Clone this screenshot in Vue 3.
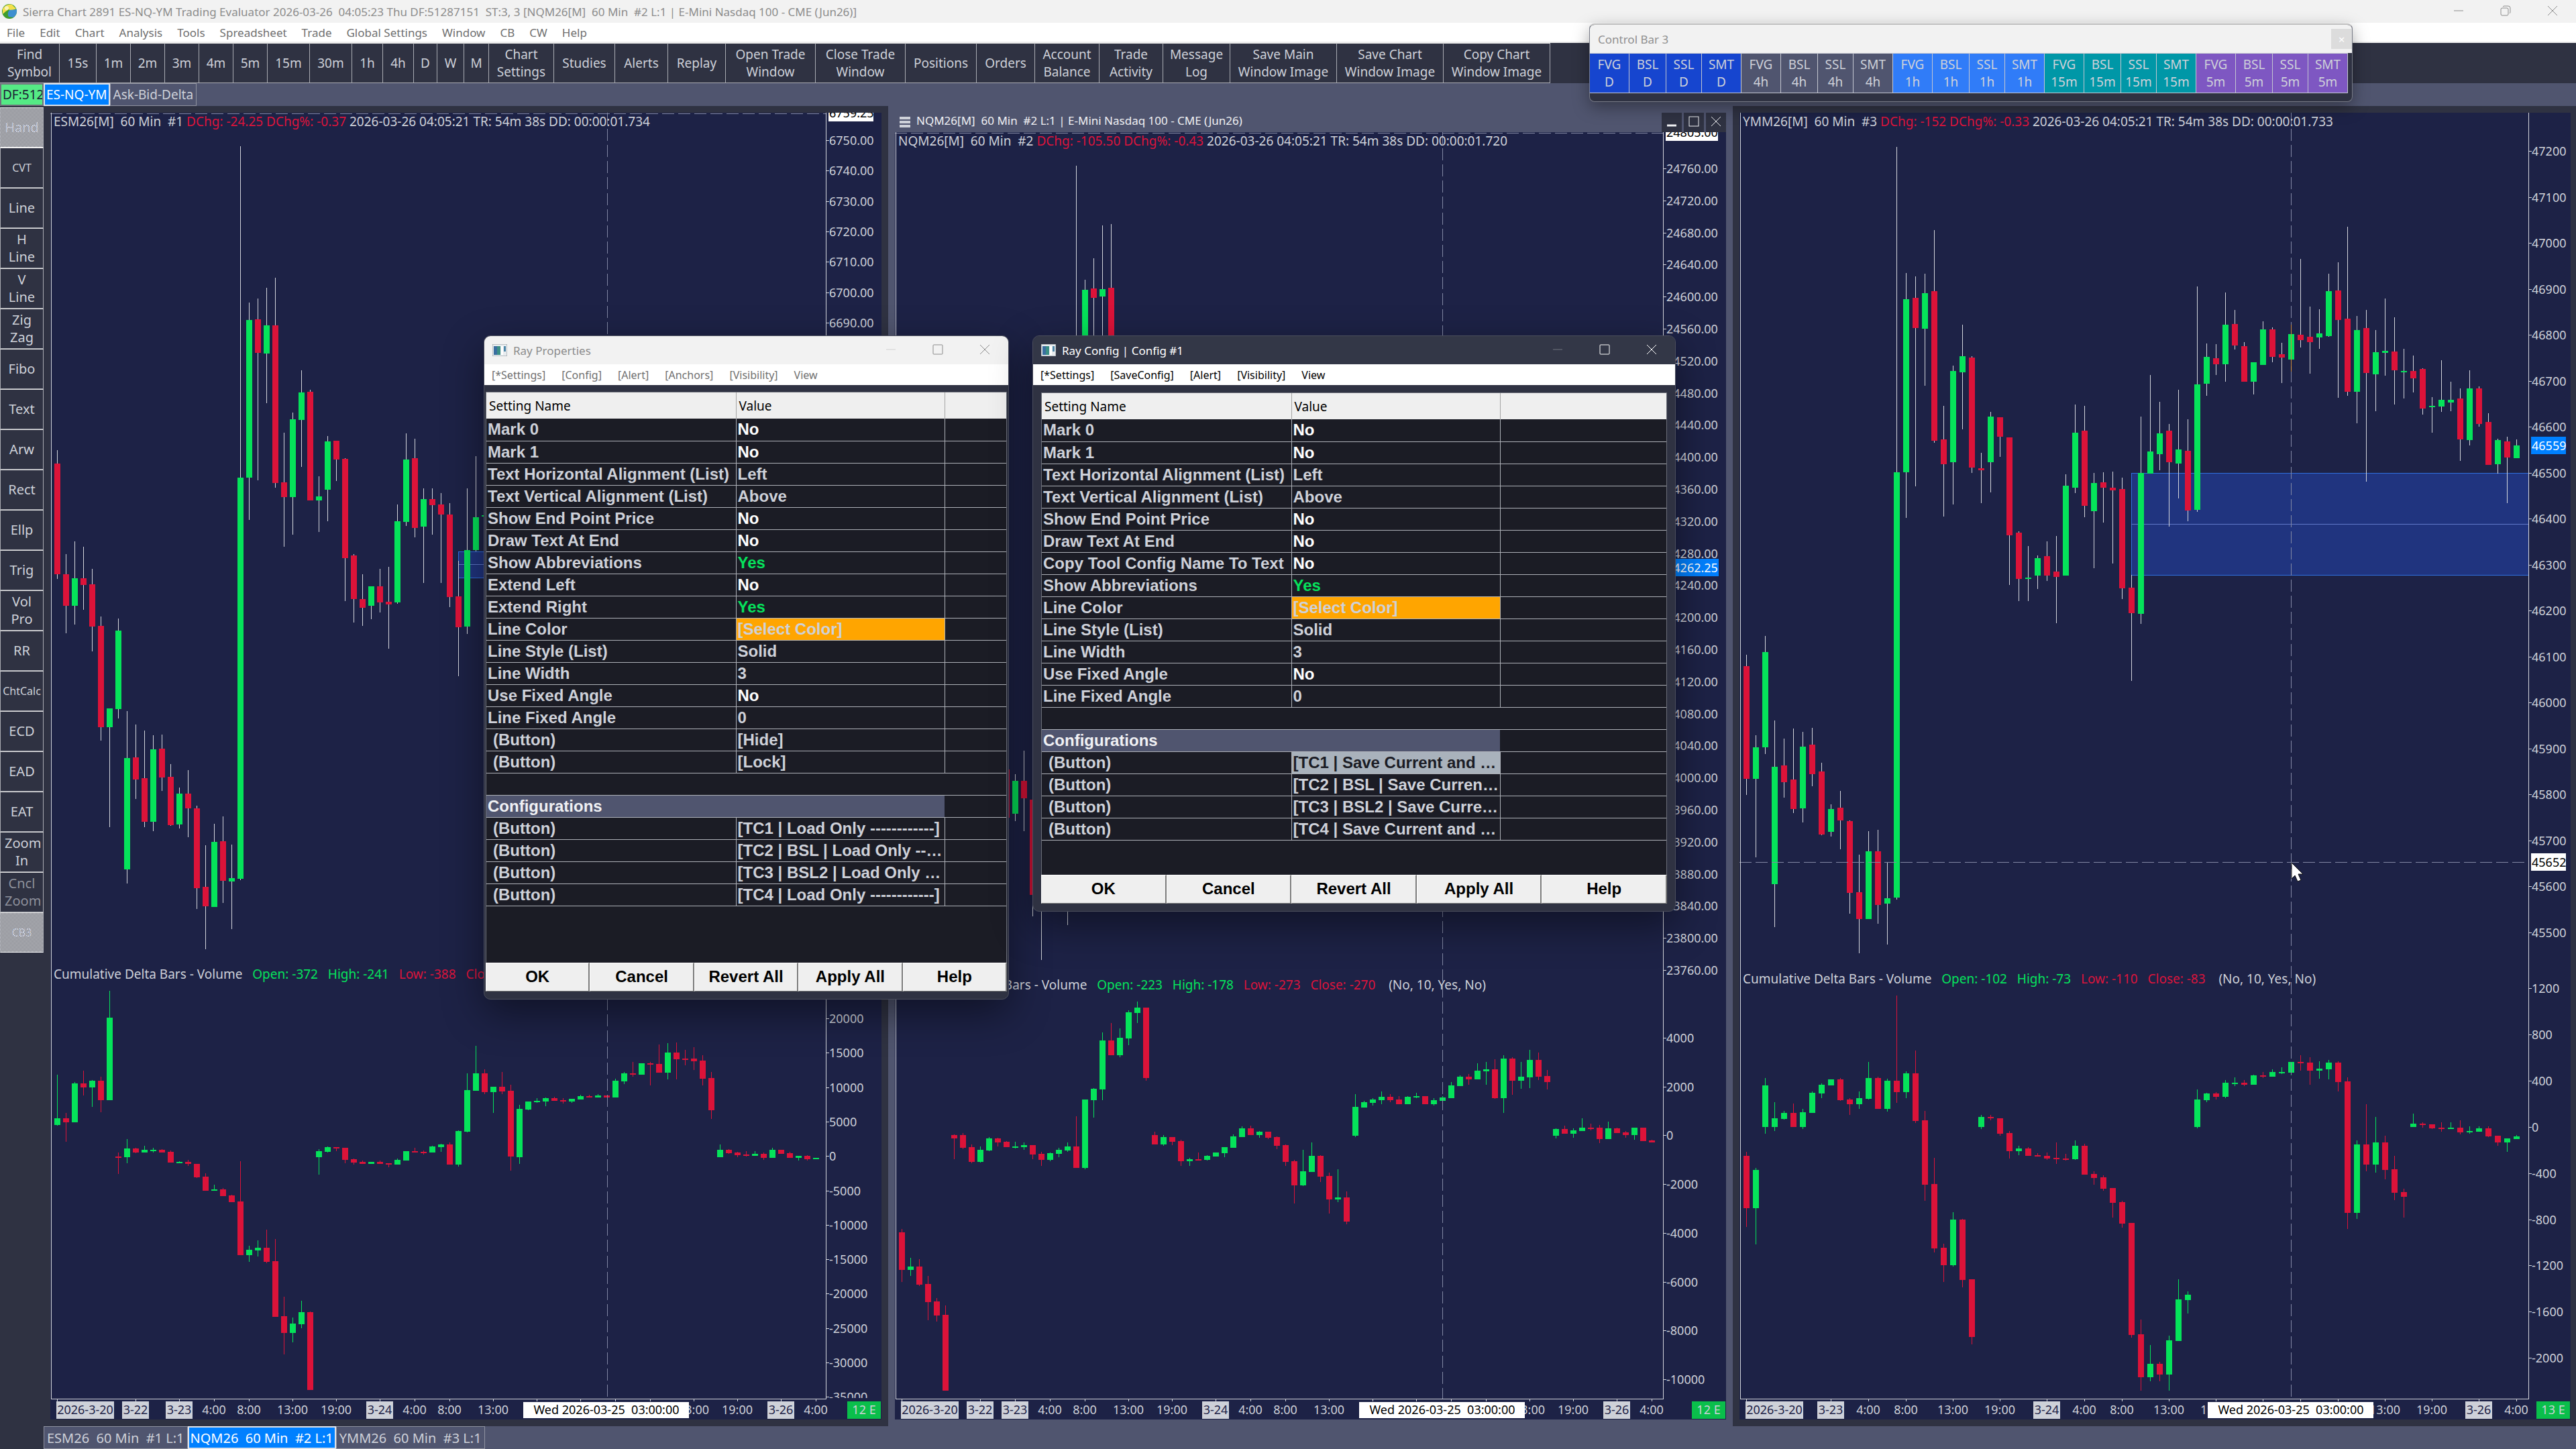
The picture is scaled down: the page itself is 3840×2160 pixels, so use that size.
<template>
  <div class="app">
    <header class="titlebar">
      <svg class="logo" viewBox="0 0 24 24">
        <circle cx="12" cy="12" r="11" fill="#3f9c2d" />
        <path d="M2 8 Q8 0 16 2 L22 8 Q15 12 11 9 Q6 12 2 16 Z" fill="#f3e04a" />
        <path d="M12 10 L23 9 Q24 16 18 21 L11 20 Q8 15 12 10Z" fill="#3d8fd0" />
        <circle cx="8" cy="7" r="3" fill="#fff" opacity="0.6" />
      </svg>
      <h1>Sierra Chart 2891 ES-NQ-YM Trading Evaluator 2026-03-26&nbsp; 04:05:23 Thu DF:51287151&nbsp; ST:3, 3 [NQM26[M]&nbsp; 60 Min&nbsp; #2 L:1 | E-Mini Nasdaq 100 - CME (Jun26)]</h1>
      <div class="win-controls">
        <button aria-label="Minimize"><svg viewBox="0 0 16 16"><path d="M1 8H15" /></svg></button>
        <button aria-label="Restore"><svg viewBox="0 0 16 16"><rect x="1" y="4" width="11" height="11" rx="2" /><path d="M4 2Q5 1 6 1H12Q15 1 15 4V10Q15 11 14 12" /></svg></button>
        <button aria-label="Close"><svg viewBox="0 0 16 16"><path d="M1 1L15 15M15 1L1 15" /></svg></button>
      </div>
    </header>

    <nav class="menubar">
      <button v-for="m in menus" :key="m">{{ m }}</button>
    </nav>

    <div class="toolbar">
      <button v-for="t in tools" :key="t[0]" :style="{ width: t[1] + 'px' }">{{ t[0] }}</button>
    </div>

    <div class="tabs">
      <button class="feed">DF:51287151</button>
      <button class="tab active">ES-NQ-YM</button>
      <button class="tab">Ask-Bid-Delta</button>
    </div>

    <div class="body">
      <aside class="sidebar">
        <button v-for="s in drawTools" :key="s.label" :class="s.cls">{{ s.label }}</button>
      </aside>

      <div class="workspace">
        <main class="charts">
          <section v-for="c in charts" :key="c.id" class="chart-window" :class="{ active: c.active }">
            <div v-if="c.active" class="caption">
              <svg class="burger" viewBox="0 0 16 16"><path d="M0 2H16M0 8H16M0 14H16" /></svg>
              <span>NQM26[M]&nbsp; 60 Min&nbsp; #2 L:1 | E-Mini Nasdaq 100 - CME (Jun26)</span>
              <div class="caption-buttons">
                <button aria-label="Minimize chart"><svg viewBox="0 0 16 16"><path d="M1 14H15" stroke-width="3" /></svg></button>
                <button aria-label="Maximize chart"><svg viewBox="0 0 16 16"><rect x="1" y="1" width="14" height="14" /></svg></button>
                <button aria-label="Close chart"><svg viewBox="0 0 16 16"><path d="M1 1L15 15M15 1L1 15" /></svg></button>
              </div>
            </div>

            <svg class="plot" :viewBox="`${c.x} ${c.y} ${c.w} ${2116 - c.y}`" preserveAspectRatio="xMinYMin meet" role="img" :aria-label="c.symbol">
              <clipPath :id="'axis' + c.id">
                <rect :x="c.axis" :y="c.y" width="120" :height="2084 - c.y" />
              </clipPath>
              <g shape-rendering="crispEdges">
                <g v-if="c.zone">
                  <rect :x="c.zone.x" :y="c.zone.y1" :width="c.axis - c.zone.x" :height="c.zone.y2 - c.zone.y1" class="zone" />
                  <path :d="`M${c.zone.x} ${c.zone.mid}H${c.axis}`" class="zone-line" />
                </g>
                <g v-for="(b, i) in c.price" :key="'p' + i">
                  <rect :x="b.x" :y="b.hi" width="1" :height="b.lo - b.hi" class="wick" />
                  <rect :x="b.x - 4" :y="b.top" width="9" :height="b.h" :class="b.cls" />
                </g>
                <g v-for="(b, i) in c.delta" :key="'d' + i" :class="b.cls">
                  <rect :x="b.x" :y="b.hi" width="1" :height="b.lo - b.hi" />
                  <rect :x="b.x - 4" :y="b.top" width="9" :height="b.h" />
                </g>
                <path :d="`M${c.cursor} ${c.y}V2085`" class="cross" />
                <path v-if="c.hline" :d="`M${c.x} ${c.hline}H${c.axis}`" class="cross" />
                <path v-else :d="`M${c.x} ${c.y + 1}H${c.axis}`" class="cross top" />
                <rect v-if="c.hline" :x="c.cursor" y="484" width="1" height="70" fill="#d98a1f" opacity="0.8" />
                <path :d="`M${c.x + 1} ${c.y}V2085H${c.axis}V${c.y}`" class="frame" />
                <path :d="c.ticks" class="frame thin" />
              </g>

              <text :x="c.x + 5" :y="c.y + 20" class="head">{{ c.symbol }}<tspan class="neg">{{ c.chg }}</tspan>{{ c.status }}</text>
              <text :x="c.x + 5" :y="c.dy" class="head">{{ 'Cumulative Delta Bars - Volume   ' }}<tspan class="pos">{{ c.d[0] }}</tspan><tspan class="neg">{{ c.d[1] }}</tspan>(No, 10, Yes, No)</text>

              <g :clip-path="`url(#axis${c.id})`">
                <text v-for="l in c.labels" :key="l.t + l.y" :x="c.axis + 5" :y="l.y + 7">{{ l.t }}</text>
              </g>
              <g v-for="f in c.flags" :key="f.t">
                <rect :x="c.axis + 4" :y="f.y - 13" :width="f.w" height="26" :class="f.cls" />
                <text :x="c.axis + 5" :y="f.y + 7" :class="f.cls">{{ f.t }}</text>
              </g>

              <g v-for="t in c.times" :key="t.i">
                <rect v-if="t.date" :x="t.x - t.w / 2" y="2089" :width="t.w" height="26" class="date" />
                <text :x="t.x" y="2108" text-anchor="middle" :class="{ date: t.date }">{{ t.t }}</text>
              </g>
              <rect :x="c.now" y="2090" width="247" height="24" fill="#fff" />
              <text :x="c.now + 124" y="2108" text-anchor="middle" class="white">{{ 'Wed 2026-03-25  03:00:00' }}</text>
              <rect :x="c.x + c.w - 51" y="2089" width="50" height="26" fill="#0abf4b" />
              <text :x="c.x + c.w - 26" y="2108" text-anchor="middle">{{ c.e }}</text>

              <path v-if="c.hline" d="M3416 1286V1310L3421 1305L3425 1314L3430 1312L3426 1303H3433Z" fill="#fff" stroke="#111" />
            </svg>
          </section>
        </main>

        <footer class="chart-tabs">
          <button class="tab">ESM26&nbsp; 60 Min&nbsp; #1 L:1</button>
          <button class="tab active">NQM26&nbsp; 60 Min&nbsp; #2 L:1</button>
          <button class="tab">YMM26&nbsp; 60 Min&nbsp; #3 L:1</button>
        </footer>
      </div>
    </div>

    <div class="control-bar">
      <div class="control-title">
        <span>Control Bar 3</span>
        <button aria-label="Close control bar">×</button>
      </div>
      <div class="control-buttons">
        <template v-for="tf in frames" :key="tf">
          <button v-for="k in kinds" :key="k" :class="['tf' + tf, k]">{{ k }}<br />{{ tf }}</button>
        </template>
      </div>
    </div>

    <div v-for="d in dialogs" :key="d.title" class="dialog" :class="d.cls" role="dialog" :aria-label="d.title">
      <div class="dialog-title">
        <svg class="dialog-icon" viewBox="0 0 22 18">
          <rect width="22" height="18" fill="#e8ecef" stroke="#8f979c" />
          <rect x="2" y="3" width="10" height="13" fill="#3b8f86" />
          <rect x="2" y="3" width="5" height="13" fill="#3a6ea0" />
          <rect x="13" y="3" width="3" height="13" fill="#fff" />
          <rect x="17" y="3" width="3" height="8" fill="#4d86a8" />
        </svg>
        <h2>{{ d.title }}</h2>
        <div class="dialog-controls">
          <button aria-label="Minimize" class="dim"><svg viewBox="0 0 16 16"><path d="M1 8H15" /></svg></button>
          <button aria-label="Maximize"><svg viewBox="0 0 16 16"><rect x="1" y="1" width="14" height="14" rx="1" /></svg></button>
          <button aria-label="Close"><svg viewBox="0 0 16 16"><path d="M1 1L15 15M15 1L1 15" /></svg></button>
        </div>
      </div>
      <nav class="dialog-menu">
        <button v-for="m in d.menu" :key="m">{{ m }}</button>
      </nav>
      <div class="dialog-body">
        <div class="grid-box">
          <table>
            <colgroup><col class="c1" /><col class="c2" /><col /></colgroup>
            <thead>
              <tr><th>Setting Name</th><th>Value</th><th></th></tr>
            </thead>
            <tbody>
              <tr v-for="(r, i) in d.rows" :key="i">
                <td v-if="!r[0]" colspan="3"></td>
                <template v-else-if="r.length === 1">
                  <td colspan="2" class="group">{{ r[0] }}</td>
                  <td></td>
                </template>
                <template v-else>
                  <td :class="{ indent: r[0] === '(Button)' }">{{ r[0] }}</td>
                  <td :class="valueClass(r)">
                    <button v-if="r[1][0] === '['">{{ r[1] }}</button>
                    <template v-else>{{ r[1] }}</template>
                  </td>
                  <td></td>
                </template>
              </tr>
            </tbody>
          </table>
        </div>
        <div class="dialog-actions">
          <button v-for="a in actions" :key="a">{{ a }}</button>
        </div>
      </div>
    </div>
  </div>
</template>

<script setup>
const menus = ['File', 'Edit', 'Chart', 'Analysis', 'Tools', 'Spreadsheet', 'Trade', 'Global Settings', 'Window', 'CB', 'CW', 'Help'];

const tools = [
  ['Find Symbol', 89], ['15s', 55], ['1m', 51], ['2m', 51], ['3m', 51], ['4m', 51], ['5m', 51], ['15m', 63], ['30m', 63],
  ['1h', 46], ['4h', 46], ['D', 35], ['W', 40], ['M', 37], ['Chart Settings', 97], ['Studies', 91], ['Alerts', 79],
  ['Replay', 86], ['Open Trade Window', 134], ['Close Trade Window', 134], ['Positions', 106], ['Orders', 87],
  ['Account Balance', 96], ['Trade Activity', 95], ['Message Log', 100], ['Save Main Window Image', 159],
  ['Save Chart Window Image', 159], ['Copy Chart Window Image', 159]
];

const drawTools = [
  { label: 'Hand', cls: 'pressed' }, { label: 'CVT', cls: 'small' }, { label: 'Line' }, { label: 'H Line' }, { label: 'V Line' },
  { label: 'Zig Zag' }, { label: 'Fibo' }, { label: 'Text' }, { label: 'Arw' }, { label: 'Rect' }, { label: 'Ellp' },
  { label: 'Trig' }, { label: 'Vol Pro' }, { label: 'RR' }, { label: 'ChtCalc', cls: 'small' }, { label: 'ECD' },
  { label: 'EAD' }, { label: 'EAT' }, { label: 'Zoom In' }, { label: 'Cncl Zoom', cls: 'off' }, { label: 'CB3', cls: 'pressed small' }
];

const frames = ['D', '4h', '1h', '15m', '5m'];
const kinds = ['FVG', 'BSL', 'SSL', 'SMT'];
const actions = ['OK', 'Cancel', 'Revert All', 'Apply All', 'Help'];

const common = [['Mark 0', 'No'], ['Mark 1', 'No'], ['Text Horizontal Alignment (List)', 'Left'], ['Text Vertical Alignment (List)', 'Above'],
  ['Show End Point Price', 'No'], ['Draw Text At End', 'No']];

const dialogs = [
  {
    title: 'Ray Properties',
    cls: 'light',
    menu: ['[*Settings]', '[Config]', '[Alert]', '[Anchors]', '[Visibility]', 'View'],
    rows: [...common, ['Show Abbreviations', 'Yes'], ['Extend Left', 'No'], ['Extend Right', 'Yes'],
      ['Line Color', '[Select Color]'], ['Line Style (List)', 'Solid'], ['Line Width', '3'], ['Use Fixed Angle', 'No'],
      ['Line Fixed Angle', '0'], ['(Button)', '[Hide]'], ['(Button)', '[Lock]'], [''], ['Configurations'],
      ['(Button)', '[TC1 | Load Only ------------]'], ['(Button)', '[TC2 | BSL | Load Only ------------]'],
      ['(Button)', '[TC3 | BSL2 | Load Only ------------]'], ['(Button)', '[TC4 | Load Only ------------]']]
  },
  {
    title: 'Ray Config | Config #1',
    cls: 'dark',
    menu: ['[*Settings]', '[SaveConfig]', '[Alert]', '[Visibility]', 'View'],
    rows: [...common, ['Copy Tool Config Name To Text', 'No'], ['Show Abbreviations', 'Yes'],
      ['Line Color', '[Select Color]'], ['Line Style (List)', 'Solid'], ['Line Width', '3'], ['Use Fixed Angle', 'No'],
      ['Line Fixed Angle', '0'], [''], ['Configurations'],
      ['(Button)', '[TC1 | Save Current and Load]', 'sel'], ['(Button)', '[TC2 | BSL | Save Current and Load]'],
      ['(Button)', '[TC3 | BSL2 | Save Current and Load]'], ['(Button)', '[TC4 | Save Current and Load]']]
  }
];

const valueClass = (r) => ({
  yes: r[1] === 'Yes',
  no: r[1] === 'No',
  color: r[1] === '[Select Color]',
  sel: r[2] === 'sel'
});

// One bar per entry: direction, wick top, body top, body bottom, wick bottom. "@n" jumps to bar n.
const parse = (text, x0, step, top, unit) => {
  const bars = [];
  let i = 0;
  for (const item of text.trim().split(/\s*,\s*/)) {
    if (item[0] === '@') {
      i = Number(item.slice(1));
      continue;
    }
    const [dir, ...v] = item.split(' ');
    const [hi, a, b, lo] = v.map((n) => Math.round(top + n * unit));
    bars.push({ x: Math.round(x0 + i * step), cls: dir === 'g' ? 'up' : 'down', hi, top: a, h: Math.max(b - a, 2), lo });
    i++;
  }
  return bars;
};

const P = 1300 / 1568;
const D = 740 / 1568;

const esPrice = parse(`r 640 665 864 872,r 827 864 920 970,g 805 871 920 954,r 814 871 883 928,r 854 882 958 1002,
r 940 956 1139 1163,g 1105 1105 1139 1318,g 943 965 1106 1123,g 1110 1194 1394 1420,r 1134 1193 1233 1268,
r 1145 1230 1309 1318,g 1153 1178 1309 1326,r 1152 1177 1229 1253,r 1205 1228 1315 1316,g 1247 1258 1314 1321,
r 1216 1258 1285 1336,r 1280 1285 1428 1465,r 1351 1426 1461 1538,g 1312 1345 1462 1462,r 1299 1344 1415 1455,
g 1350 1410 1416 1502,g 94 690 1411 1414,g 375 406 690 766,r 368 405 466 695,g 349 416 467 556,r 330 416 700 708,
r 609 698 725 814,g 573 585 725 792,g 497 537 586 671,r 532 536 731 731,g 688 724 731 788,g 615 625 712 768,
r 624 624 657 696,r 655 656 835 912,r 827 830 908 950,r 864 908 924 956,g 885 885 920 944,r 854 885 914 932,
r 850 913 918 997,g 738 768 914 917,g 610 657 770 777,r 620 655 780 797,g 709 729 778 879,r 709 729 739 792,
r 718 738 756 879,r 736 756 905 923,r 840 903 959 1047,g 709 820 958 971,g 651 761 820 823,g 755 757 760 765`, 85, 13, 140, P);

const esDelta = parse(`g 386 523 545 547,r 506 523 536 597,g 409 413 536 536,r 373 413 426 451,g 403 405 426 487,
r 391 405 466 504,g 121 206 466 466,r 631 644 648 699,g 588 619 646 665,r 617 619 631 634,g 610 623 631 631,
g 617 623 625 631,r 621 623 631 631,r 626 629 663 663,g 659 661 664 665,r 655 661 668 674,r 667 667 710 713,
r 698 708 752 752,g 734 748 752 752,r 744 748 769 769,r 765 767 788 788,r 658 786 956 956,g 926 939 956 977,
g 909 932 941 960,r 875 932 977 981,r 905 975 1151 1151,r 1087 1148 1201 1269,g 1153 1172 1201 1231,
g 1100 1136 1174 1187,r 1134 1136 1382 1382,g 621 627 646 701,g 612 614 629 631,r 614 614 619 627,r 617 617 655 665,
r 650 653 663 669,r 657 661 667 667,g 661 661 667 667,r 657 661 667 667,r 665 665 670 678,g 650 655 670 670,
g 627 627 657 657,r 617 627 631 631,r 625 629 631 638,g 610 612 631 631,g 604 606 614 629,r 600 606 670 670,
g 562 564 670 676,g 381 434 566 568,g 294 381 436 436,r 369 381 441 447,g 424 424 441 506,r 377 424 439 447,
r 417 436 644 688,g 481 494 646 667,g 470 470 496 498,g 460 468 473 475,g 458 460 470 485,r 456 460 468 468,
r 460 466 470 477,g 462 462 470 475,g 449 453 464 464,r 449 453 458 458,g 447 451 458 458,r 451 451 458 458,
g 398 405 458 458,g 377 381 407 415,r 345 381 386 392,g 350 350 386 386,r 345 350 354 420,r 290 352 379 379,
g 287 316 379 400,r 284 316 337 400,r 307 335 337 357,r 299 335 343 370,r 325 341 398 419,r 377 396 498 525,
g 607 623 646 646,r 621 623 634 636,r 629 631 640 646,r 627 638 642 644,g 627 636 642 642,r 631 636 648 655,
g 617 623 648 648,r 623 623 636 636,r 629 634 648 648,g 642 642 648 657,r 640 642 653 657,g 648 648 653 653`, 85, 13, 1420, D);

const nqPrice = parse(`@12,r 1130 1147 1219 1230,g 1154 1164 1213 1224,r 1119 1164 1190 1239,r 1180 1192 1334 1366,
g 1300 1340 1350 1431,@19,g 1300 1320 1350 1379,g 247 600 900 1000,g 417 432 520 560,r 385 430 444 560,
g 336 431 442 560,r 334 429 560 600`, 1344, 13, 0, 1);

const nqDelta = parse(`r 873 884 1002 1040,g 964 992 1002 1021,r 968 992 1049 1053,r 1021 1047 1104 1161,
r 1091 1102 1146 1165,r 1114 1144 1384 1384,r 574 576 587 653,r 571 576 617 621,r 606 614 661 665,g 612 623 661 663,
g 582 587 625 627,r 584 587 600 612,r 595 598 614 614,g 598 612 614 619,g 600 608 614 623,r 608 608 638 653,
r 629 636 655 674,g 631 634 655 659,g 617 623 636 646,g 600 612 625 629,r 517 612 680 680,g 464 464 680 684,
g 428 430 466 521,g 252 278 432 466,r 222 278 324 324,g 239 269 324 331,g 182 189 271 292,g 155 174 191 222,
r 174 174 396 405,r 566 576 606 606,g 576 583 606 611,r 583 583 598 608,r 592 595 659 674,g 648 653 659 674,
r 631 653 655 657,g 640 642 655 657,g 631 631 644 644,g 614 614 634 646,g 574 580 617 617,g 549 555 583 583,
r 547 555 576 576,g 563 566 576 585,r 566 566 585 589,r 581 583 610 621,r 606 608 661 674,r 655 659 735 792,
g 623 691 735 738,g 600 642 693 693,r 640 642 708 725,r 695 706 780 824,g 684 773 780 788,r 754 773 850 858,
g 447 487 578 583,g 468 473 489 489,g 460 464 475 483,g 439 456 466 479,r 447 456 466 473,r 453 464 479 479,
g 453 456 479 479,g 443 453 458 460,r 453 453 479 479,g 460 466 479 483,g 453 458 468 468,g 409 420 460 460,
g 388 392 422 422,r 384 392 400 417,g 350 373 400 400,g 345 369 375 417,r 337 369 460 462,g 324 335 460 506,
r 331 335 405 449,g 345 392 405 430,g 307 339 394 428,r 315 339 392 403,r 371 390 409 432,g 555 557 578 587,
r 547 557 572 572,g 555 562 572 585,g 523 553 564 564,r 540 553 555 562,r 545 553 589 602,g 534 555 589 589,
r 553 555 570 570,r 563 568 576 585,g 553 553 576 591,r 553 553 595 595,r 591 593 600 600`, 1344, 13, 1420, D);

const ymPrice = parse(`r 1008 1029 1231 1260,g 1153 1175 1231 1373,g 975 1004 1175 1187,g 1127 1210 1421 1498,
r 1159 1207 1238 1265,r 1141 1233 1286 1293,g 1147 1174 1285 1310,r 1140 1170 1223 1245,r 1203 1218 1332 1333,
g 1277 1286 1327 1335,r 1253 1283 1306 1358,r 1306 1307 1437 1474,r 1368 1435 1484 1545,g 1326 1362 1484 1484,
r 1323 1362 1458 1492,g 1381 1446 1456 1529,g 95 680 1445 1448,g 322 369 680 762,r 328 367 421 706,g 323 358 422 525,
r 245 355 624 627,r 561 621 666 760,g 488 498 662 738,g 415 472 501 603,r 472 474 672 681,r 645 673 677 736,
g 572 580 662 716,r 581 581 616 653,r 618 618 794 883,r 786 789 872 912,g 813 870 872 912,g 830 835 866 890,
r 805 831 866 876,r 795 859 868 952,g 684 704 866 866,g 558 609 708 718,r 561 605 741 761,g 681 700 750 853,
r 680 698 708 771,r 679 708 713 844,r 690 710 889 908,r 865 888 934 1055,g 580 682 935 953,g 505 643 683 683,
g 554 610 648 677,r 593 605 662 778,g 532 639 665 727,r 585 642 749 768,g 346 522 748 751,g 449 473 521 543,
r 450 475 486 505,g 357 415 486 517,r 388 414 452 460,r 446 454 517 518,g 482 482 517 540,g 409 423 487 487,
r 420 423 473 482,r 447 468 474 520,g 415 432 478 500,r 297 433 443 456,r 382 437 446 503,g 387 431 438 458,
g 323 355 435 437,r 303 353 406 546,r 239 404 536 543,g 399 425 536 592,r 388 421 502 697,g 425 464 504 570,
g 368 462 465 507,r 402 463 497 558,g 458 498 501 548,r 470 498 511 537,r 493 495 566 577,g 545 561 563 609,
g 479 550 562 572,g 518 550 555 570,r 530 548 621 660,g 497 530 622 632,r 526 530 593 598,r 574 590 667 667,
g 620 622 666 683,r 616 625 654 736,g 621 632 655 655`, 2603, 14, 140, P);

const ymDelta = parse(`r 630 642 807 867,g 680 687 807 922,g 396 420 551 572,g 473 523 551 563,g 500 506 525 528,
r 477 506 551 551,g 494 504 551 558,g 439 443 506 506,g 413 417 445 460,g 400 400 420 420,r 396 400 466 468,
r 460 464 479 513,g 439 460 479 494,g 345 396 462 464,r 392 396 494 494,g 398 405 494 502,r 135 405 441 475,
g 375 381 441 460,r 309 381 532 538,r 500 530 733 785,r 648 731 934 947,r 919 932 988 1040,g 820 843 987 991,
r 841 843 1034 1057,r 1032 1032 1214 1237,g 513 519 551 558,r 513 519 523 530,r 523 523 572 578,r 563 570 627 650,
g 610 619 627 640,r 614 619 642 642,r 634 640 644 644,r 631 642 651 655,r 600 648 653 667,r 636 651 653 657,
g 593 610 653 655,r 604 610 701 701,r 691 699 712 733,r 703 710 746 752,r 744 744 790 836,r 784 788 856 869,
r 854 854 1208 1216,r 1159 1206 1341 1384,g 1240 1299 1341 1354,r 1293 1299 1333 1354,g 1210 1225 1333 1384,
g 1032 1095 1227 1227,g 1070 1081 1098 1140,g 432 464 551 555,g 443 445 466 473,r 441 445 456 464,g 403 411 456 460,
g 394 411 413 422,r 403 411 417 422,g 386 388 417 417,r 377 388 392 396,g 369 377 392 392,g 362 377 379 384,
g 345 345 379 388,r 324 345 350 373,r 331 348 373 417,g 343 367 373 398,g 339 348 369 400,r 343 348 409 439,
r 394 407 822 873,g 593 606 822 841,r 479 606 670 691,g 519 600 670 695,r 578 600 687 716,r 642 684 759 782,
r 746 756 771 836,g 509 540 551 551,r 536 540 545 553,r 542 542 555 558,r 536 553 557 566,g 536 553 557 557,
r 530 553 568 574,g 549 564 568 572,g 549 555 566 566,r 549 555 581 583,r 578 578 600 610,g 587 587 600 629,
g 576 581 589 589`, 2603, 14, 1420, D);

const scale = (from, by, count, y, step, digits = 0) =>
  Array.from({ length: count }, (_, i) => ({ t: (from - by * i).toFixed(digits), y: Math.round(y + step * i) }));

const timeAxis = (x0, step, list) => list.map(([i, t]) => {
  const date = t.includes('-');
  const w = t.length > 5 ? 86 : 40;
  return { i, t, date, w, x: x0 + i * step + (w > 40 ? 42 : 0) };
});

const makeTicks = (axis, labels, x0, step, times) =>
  labels.map((l) => `M${axis} ${l.y}h5`).join('') + times.map(([i]) => `M${x0 + i * step} 2085v4`).join('');

const build = (c) => ({
  ...c,
  times: timeAxis(c.x0, c.step, c.marks),
  ticks: makeTicks(c.axis, c.labels, c.x0, c.step, c.marks)
});

const charts = [
  build({
    id: 'ES', x: 75, y: 168, w: 1239, axis: 1231, cursor: 905, now: 780, e: '12 E', x0: 85, step: 13,
    symbol: 'ESM26[M]  60 Min  #1 ', chg: 'DChg: -24.25 DChg%: -0.37 ', status: '2026-03-26 04:05:21 TR: 54m 38s DD: 00:00:01.734',
    dy: 1459, d: ['Open: -372   High: -241   ', 'Low: -388   Close: -375    '],
    price: esPrice, delta: esDelta,
    zone: { x: 683, y1: 822, mid: 841, y2: 861 },
    labels: [...scale(6750, 10, 20, 209, 45.3, 2), ...scale(20000, 5000, 12, 1518, 51.3)].filter((l) => l.y < 1060 || l.y > 1500),
    flags: [{ t: '6759.25', y: 168, w: 67, cls: 'white' }],
    marks: [[0, '2026-3-20'], [9, '3-22'], [14, '3-23'], [18, '4:00'], [22, '8:00'], [27, '13:00'], [32, '19:00'], [37, '3-24'],
      [41, '4:00'], [45, '8:00'], [50, '13:00'], [55, ''], [60, ''], [64, ''], [68, ''], [73, '13:00'], [78, '19:00'], [83, '3-26'], [87, '4:00']]
  }),
  build({
    id: 'NQ', active: true, x: 1334, y: 197, w: 1239, axis: 2479, cursor: 2150, now: 2026, e: '12 E', x0: 1344, step: 13,
    symbol: 'NQM26[M]  60 Min  #2 ', chg: 'DChg: -105.50 DChg%: -0.43 ', status: '2026-03-26 04:05:21 TR: 54m 38s DD: 00:00:01.720',
    dy: 1475, d: ['Open: -223   High: -178   ', 'Low: -273   Close: -270    '],
    price: nqPrice, delta: nqDelta,
    labels: [...scale(24760, 40, 26, 251, 47.8, 2), ...scale(4000, 2000, 8, 1547, 72.7)],
    flags: [{ t: '24805.00', y: 197, w: 78, cls: 'white' }, { t: '24262.25', y: 846, w: 79, cls: 'last' }],
    marks: [[0, '2026-3-20'], [9, '3-22'], [13, '3-23'], [17, '4:00'], [21, '8:00'], [26, '13:00'], [31, '19:00'], [36, '3-24'],
      [40, '4:00'], [44, '8:00'], [49, '13:00'], [54, ''], [59, ''], [63, ''], [67, ''], [72, '13:00'], [77, '19:00'], [82, '3-26'], [86, '4:00']]
  }),
  build({
    id: 'YM', x: 2593, y: 168, w: 1239, axis: 3769, cursor: 3415, now: 3291, e: '13 E', x0: 2603, step: 14, hline: 1285,
    symbol: 'YMM26[M]  60 Min  #3 ', chg: 'DChg: -152 DChg%: -0.33 ', status: '2026-03-26 04:05:21 TR: 54m 38s DD: 00:00:01.733',
    dy: 1466, d: ['Open: -102   High: -73   ', 'Low: -110   Close: -83    '],
    price: ymPrice, delta: ymDelta,
    zone: { x: 3177, y1: 705, mid: 781, y2: 857 },
    labels: [...scale(47200, 100, 18, 225, 68.5), ...scale(1200, 400, 9, 1473, 68.9)],
    flags: [{ t: '46559', y: 664, w: 52, cls: 'last' }, { t: '45652', y: 1285, w: 52, cls: 'white' }],
    marks: [[0, '2026-3-20'], [9, '3-23'], [13, '4:00'], [17, '8:00'], [22, '13:00'], [27, '19:00'], [32, '3-24'], [36, '4:00'],
      [40, '8:00'], [45, '13:00'], [50, '19:00'], [55, ''], [59, ''], [63, ''], [68, '13:00'], [73, '19:00'], [78, '3-26'], [82, '4:00']]
  })
];
</script>

<style>
body {
  background: #50556f;
}
</style>

<style scoped>
.app {
  position: relative;
  display: flex;
  flex-direction: column;
  min-height: 100vh;
  box-sizing: border-box;
  overflow: hidden;
  background: #50556f;
  color: #ced1d9;
  font-family: "Noto Sans", "Open Sans", sans-serif;
  font-size: 19px;
}

button {
  margin: 0;
  padding: 0;
  border: 0;
  background: none;
  color: inherit;
  font: inherit;
  cursor: pointer;
}

h1,
h2 {
  margin: 0;
  font-size: 17px;
  font-weight: 400;
}

.titlebar {
  display: flex;
  align-items: center;
  height: 34px;
  padding-left: 2px;
  background: #f2f2f2;
  color: #8c8c8c;
}

.logo {
  width: 24px;
  height: 24px;
  margin-right: 8px;
}

.win-controls {
  display: flex;
  margin-left: auto;
}

.win-controls button {
  width: 70px;
  height: 34px;
}

.win-controls svg,
.dialog-controls svg,
.caption-buttons svg {
  width: 16px;
  height: 16px;
  fill: none;
  stroke: currentColor;
}

.menubar {
  display: flex;
  gap: 22px;
  height: 28px;
  padding-left: 10px;
  border-bottom: 2px solid #ededed;
  background: #fff;
  color: #707070;
  font-size: 17px;
}

.toolbar {
  display: flex;
  height: 60px;
  background: #2f3242;
}

.toolbar button {
  box-sizing: border-box;
  flex: none;
  padding: 0 8px;
  border: 1px solid #a9abb2;
  border-top-color: #e6e6e6;
  border-left-width: 0;
  line-height: 26px;
}

.tabs,
.chart-tabs {
  display: flex;
  height: 34px;
}

.chart-tabs {
  font-size: 20px;
}

.feed {
  width: 65px;
  padding-left: 2px;
  overflow: hidden;
  border: 2px solid #70727c;
  background: #55ea85;
  color: #1d2236;
  text-align: left;
}

.tab {
  padding: 0 4px;
  border: 1px solid #8f929f;
  white-space: nowrap;
}

.tab.active {
  padding: 0 2px;
  border: 2px solid #dfe3ea;
  background: #0080ff;
  color: #fff;
}

.body {
  display: flex;
  flex: 1;
}

.sidebar {
  width: 65px;
  flex: none;
  padding-top: 2px;
  background: #2f3242;
}

.sidebar button {
  display: block;
  box-sizing: border-box;
  width: 65px;
  height: 60px;
  padding: 0 6px;
  border: 1px solid #a9abb2;
  border-top-color: #e6e6e6;
  font-size: 20px;
  line-height: 26px;
}

.sidebar .small {
  padding: 0;
  font-size: 16px;
}

.sidebar .off {
  color: #8d909b;
}

.sidebar .pressed {
  background: repeating-conic-gradient(#50535f 0 25%, #eeeeee 0 50%) 0 0 / 2px 2px;
  color: #c4c8d6;
  border-bottom-color: #fff;
}

.workspace {
  display: flex;
  flex: 1;
  flex-direction: column;
  min-width: 0;
}

.charts {
  display: grid;
  flex: 1;
  grid-template-columns: 1259fr 1259fr 1257fr;
  align-items: start;
}

.chart-window {
  padding: 10px;
  background: #2f3242;
}

.chart-window:last-child {
  padding-right: 8px;
}

.chart-window.active {
  background: #50556f;
}

.caption {
  display: flex;
  height: 29px;
  color: #f0f1f4;
  font-size: 17px;
  line-height: 24px;
}

.burger {
  width: 16px;
  height: 16px;
  margin: 6px 9px 0 7px;
  stroke: #ced1d9;
  stroke-width: 4;
}

.caption-buttons {
  display: flex;
  gap: 3px;
  margin-left: auto;
}

.caption-buttons button {
  width: 30px;
  height: 29px;
  background: #2f3242;
}

.plot {
  display: block;
  width: 100%;
  height: auto;
  background: #1d2246;
}

.plot text {
  fill: #ced1d9;
  font-size: 18px;
  white-space: pre;
}

.plot text.head {
  font-size: 19px;
}

.plot .pos {
  fill: #06e35c;
}

.plot .neg {
  fill: #dc143c;
}

.up {
  fill: #05e35a;
}

.down {
  fill: #dc1339;
}

.wick {
  fill: #d4d6dc;
}

.cross {
  fill: none;
  stroke: #8187a3;
  stroke-dasharray: 18 6;
}

.frame {
  fill: none;
  stroke: #d4d6dc;
}

.zone {
  fill: #20347f;
  stroke: #2f6fe0;
}

.zone-line {
  stroke: #5f78c8;
}

rect.white {
  fill: #fff;
}

.plot text.white {
  fill: #000;
}

rect.last {
  fill: #0080ff;
}

.plot text.last {
  fill: #fff;
}

rect.date {
  fill: #ced1d9;
}

.plot text.date {
  fill: #1d2246;
}

.control-bar {
  position: absolute;
  top: 35px;
  left: 2369px;
  overflow: hidden;
  padding-bottom: 12px;
  border: 1px solid #777a86;
  border-top: 2px solid #c0c0c0;
  border-radius: 8px;
  background: #2f3242;
  box-shadow: 0 8px 24px rgba(0, 0, 0, 0.35);
}

.control-title {
  display: flex;
  align-items: center;
  justify-content: space-between;
  height: 42px;
  padding-left: 12px;
  background: #f2f2f2;
  color: #8f8f8f;
  font-size: 17px;
}

.control-title button {
  width: 31px;
  height: 30px;
  background: #dcdcdc;
  color: #fff;
}

.control-buttons {
  display: flex;
  padding-right: 6px;
}

.control-buttons button {
  box-sizing: border-box;
  width: 59px;
  height: 60px;
  border: 1px solid #c3c6d0;
  border-left-width: 0;
  line-height: 26px;
}

.control-buttons .BSL {
  width: 55px;
}

.control-buttons .SSL {
  width: 53px;
}

.tfD {
  background: #1645cf;
}

.tf4h {
  background: #50556f;
}

.tf1h {
  background: #307cf8;
}

.tf15m {
  background: #0097a7;
}

.tf5m {
  background: #7e57c2;
}

.dialog {
  position: absolute;
  display: flex;
  flex-direction: column;
  overflow: hidden;
  box-sizing: border-box;
  border: 1px solid #4a4d5c;
  border-radius: 10px;
  background: #2f3242;
  box-shadow: 0 20px 60px rgba(0, 0, 0, 0.45);
}

.dialog.light {
  top: 500px;
  left: 721px;
  width: 783px;
}

.dialog.dark {
  top: 500px;
  left: 1539px;
  width: 959px;
}

.dialog-title {
  display: flex;
  align-items: center;
  height: 42px;
  padding-left: 12px;
}

.light .dialog-title {
  background: #f2f2f2;
  color: #8c8c8c;
}

.dark .dialog-title {
  background: #333747;
  color: #fff;
}

.dialog-icon {
  width: 22px;
  height: 18px;
  margin-right: 9px;
}

.dialog-controls {
  display: flex;
  margin-left: auto;
}

.dialog-controls button {
  width: 70px;
}

.dialog-controls .dim {
  opacity: 0.3;
}

.dialog-menu {
  display: flex;
  gap: 24px;
  height: 31px;
  padding-left: 11px;
  background: #fff;
  color: #000;
  font-size: 16px;
}

.light .dialog-menu {
  color: #707070;
}

.dialog-body {
  padding: 10px 2px 11px;
}

.dark .dialog-body {
  padding: 11px 12px;
}

.grid-box {
  border: 1px solid #6b6e78;
  border-bottom: 0;
  background: #1b1c25;
}

.light .grid-box {
  padding-bottom: 84px;
}

.dark .grid-box {
  padding-bottom: 51px;
}

table {
  width: 100%;
  border-collapse: collapse;
  table-layout: fixed;
  font-family: "Liberation Sans", Arial, sans-serif;
  font-size: 24px;
  font-weight: 700;
}

.c1 {
  width: 372px;
}

.c2 {
  width: 311px;
}

th {
  height: 39px;
  box-sizing: border-box;
  padding: 0 4px;
  border-right: 1px solid #a5a5a5;
  background: #efefef;
  color: #000;
  font-family: "Noto Sans", "Open Sans", sans-serif;
  font-size: 19px;
  font-weight: 400;
  text-align: left;
}

th:last-child {
  border-right: 0;
}

td {
  height: 33px;
  box-sizing: border-box;
  padding: 0 0 0 2px;
  overflow: hidden;
  border-right: 1px solid #aeb1b8;
  border-bottom: 1px solid #aeb1b8;
  line-height: 32px;
  white-space: nowrap;
}

td:last-child {
  border-right: 0;
}

td button {
  display: block;
  width: 100%;
  overflow: hidden;
  text-align: left;
  text-overflow: ellipsis;
  white-space: nowrap;
}

.indent {
  padding-left: 10px;
}

.group {
  border-right: 0;
  background: #50556f;
  color: #f0f1f4;
}

.no {
  color: #fff;
}

.yes {
  color: #06e35c;
}

.color {
  background: #ffa500;
}

.sel {
  background: #a9b2bc;
  color: #1b1c25;
}

.dialog-actions {
  display: flex;
}

.dialog-actions button {
  flex: 1;
  height: 43px;
  border: 1px solid #fff;
  border-right: 2px solid #7b7b7b;
  border-bottom-color: #7b7b7b;
  background: #efefef;
  color: #000;
  font-family: "Liberation Sans", Arial, sans-serif;
  font-size: 24px;
  font-weight: 700;
}
</style>
